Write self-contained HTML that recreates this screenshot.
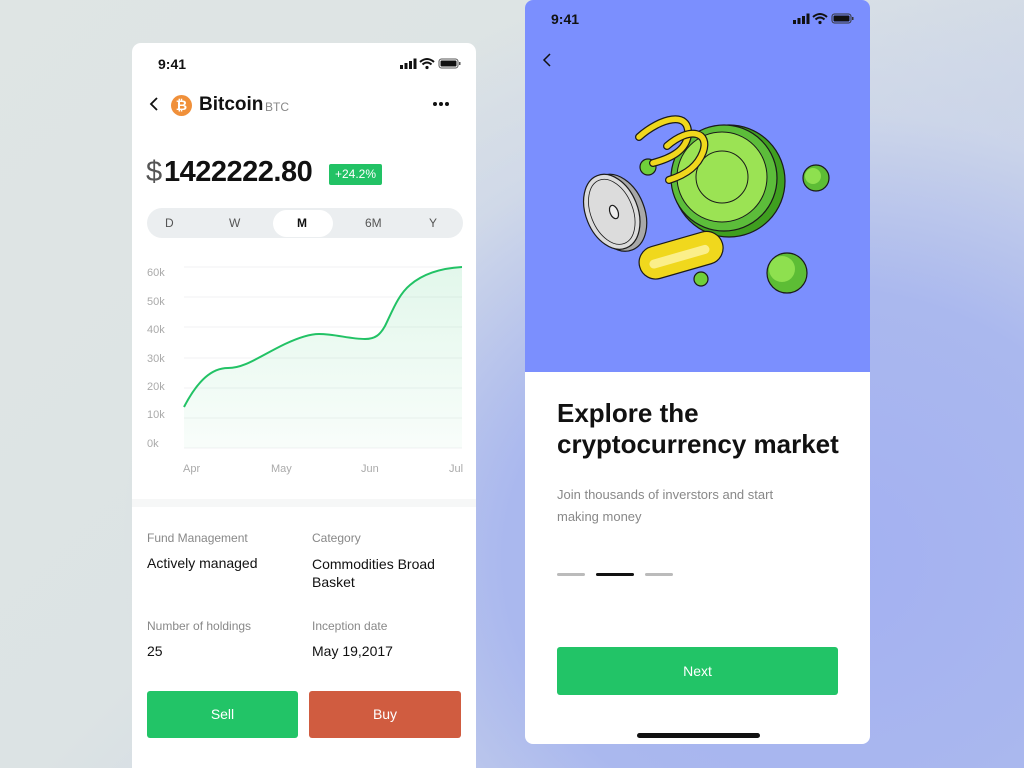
<!DOCTYPE html>
<html><head><meta charset="utf-8"><style>
*{margin:0;padding:0;box-sizing:border-box}
html,body{width:1024px;height:768px;overflow:hidden}
body{position:relative;font-family:"Liberation Sans",sans-serif;
background:radial-gradient(ellipse 700px 600px at 820px 560px,#a3b0f2 0%,#aab8ee 45%,rgba(200,210,235,0.6) 75%,rgba(223,229,228,0) 100%),linear-gradient(135deg,#dfe5e4 0%,#dce3e4 45%,#b9c4ec 100%)}
.abs{position:absolute}
.card{position:absolute;background:#fff;overflow:hidden}
.t{position:absolute;white-space:nowrap}
</style></head><body>

<!-- LEFT CARD -->
<div class="card" style="left:132px;top:43px;width:344px;height:725px;border-radius:9px 9px 0 0">
  <div class="t" style="left:26px;top:13px;font-size:14px;font-weight:bold;color:#111">9:41</div>
  <svg class="abs" style="left:266px;top:14px" width="64" height="14">
    <rect x="2" y="8" width="3" height="4" fill="#111"/><rect x="6.5" y="6" width="3" height="6" fill="#111"/><rect x="11" y="4" width="3" height="8" fill="#111"/><rect x="15.5" y="1.5" width="3" height="10.5" fill="#111"/>
    <path d="M22 5 Q29 -1 36 5" stroke="#111" stroke-width="2" fill="none"/><path d="M24.5 7.5 Q29 3.5 33.5 7.5" stroke="#111" stroke-width="2" fill="none"/><circle cx="29" cy="10.5" r="1.6" fill="#111"/>
    <rect x="41" y="2" width="19" height="9" rx="2.5" fill="none" stroke="#555" stroke-width="1"/><rect x="42.5" y="3.5" width="16" height="6" rx="1" fill="#111"/><rect x="61" y="5" width="1.5" height="3" fill="#555"/>
  </svg>
  <svg class="abs" style="left:16px;top:53px" width="12" height="16"><path d="M9 2 L3 8 L9 14" stroke="#111" stroke-width="1.8" fill="none"/></svg>
  <div class="abs" style="left:39px;top:52px;width:21px;height:21px;border-radius:50%;background:#f0903a;color:#fff;font-weight:bold;font-size:14px;text-align:center;line-height:21px">₿</div>
  <div class="t" style="left:67px;top:51px;font-size:19px;font-weight:bold;color:#111">Bitcoin</div>
  <div class="t" style="left:133px;top:57px;font-size:12px;color:#888">BTC</div>
  <div class="abs" style="left:301px;top:59px;width:4px;height:4px;border-radius:50%;background:#111;box-shadow:6px 0 #111,12px 0 #111"></div>
  <div class="t" style="left:14px;top:113px;font-size:29px;color:#555;font-weight:300">$</div>
  <div class="t" style="left:32px;top:113px;font-size:29px;font-weight:bold;color:#111;letter-spacing:-0.5px">1422222.80</div>
  <div class="abs" style="left:197px;top:121px;width:53px;height:21px;background:#22c265;border-radius:2px;color:#fff;font-size:12px;text-align:center;line-height:21px">+24.2%</div>
  <div class="abs" style="left:15px;top:165px;width:316px;height:30px;background:#ebeef0;border-radius:15px"></div>
  <div class="abs" style="left:141px;top:167px;width:60px;height:27px;background:#fff;border-radius:14px"></div>
  <div class="t" style="left:33px;top:173px;font-size:12px;color:#555">D</div>
  <div class="t" style="left:97px;top:173px;font-size:12px;color:#555">W</div>
  <div class="t" style="left:165px;top:173px;font-size:12px;color:#111;font-weight:bold">M</div>
  <div class="t" style="left:233px;top:173px;font-size:12px;color:#555">6M</div>
  <div class="t" style="left:297px;top:173px;font-size:12px;color:#555">Y</div>
  <div class="abs" style="left:0;top:456px;width:344px;height:8px;background:#f6f7f7"></div>
  <div class="t" style="left:15px;top:488px;font-size:12px;color:#888">Fund Management</div>
  <div class="t" style="left:180px;top:488px;font-size:12px;color:#888">Category</div>
  <div class="t" style="left:15px;top:512px;font-size:14px;color:#111">Actively managed</div>
  <div class="t" style="left:180px;top:512px;font-size:14px;color:#111;line-height:18px">Commodities Broad<br>Basket</div>
  <div class="t" style="left:15px;top:576px;font-size:12px;color:#888">Number of holdings</div>
  <div class="t" style="left:180px;top:576px;font-size:12px;color:#888">Inception date</div>
  <div class="t" style="left:15px;top:600px;font-size:14px;color:#111">25</div>
  <div class="t" style="left:180px;top:600px;font-size:14px;color:#111">May 19,2017</div>
  <div class="abs" style="left:15px;top:648px;width:151px;height:47px;background:#22c467;border-radius:3px;color:#fff;font-size:14px;text-align:center;line-height:47px">Sell</div>
  <div class="abs" style="left:177px;top:648px;width:152px;height:47px;background:#d05c40;border-radius:3px;color:#fff;font-size:14px;text-align:center;line-height:47px">Buy</div>
</div>
<svg class="abs" style="left:0;top:0" width="1024" height="768">
  <defs><linearGradient id="g" x1="0" y1="0" x2="0" y2="1"><stop offset="0" stop-color="#22c265" stop-opacity="0.13"/><stop offset="1" stop-color="#22c265" stop-opacity="0.03"/></linearGradient></defs>
  <g stroke="#f1f2f3" stroke-width="1">
    <line x1="184" y1="267" x2="462" y2="267"/><line x1="184" y1="297" x2="462" y2="297"/><line x1="184" y1="327" x2="462" y2="327"/><line x1="184" y1="358" x2="462" y2="358"/><line x1="184" y1="388" x2="462" y2="388"/><line x1="184" y1="418" x2="462" y2="418"/><line x1="184" y1="448" x2="462" y2="448"/>
  </g>
  <path d="M184 407 C198 380 212 368 228 368 C245 368 260 356 285 344 C300 337 310 334 319 334 C335 334 350 339 365 339 C375 339 380 335 385 326 C392 312 398 295 410 285 C425 272 445 268 462 267 L462 448 L184 448 Z" fill="url(#g)"/>
  <path d="M184 407 C198 380 212 368 228 368 C245 368 260 356 285 344 C300 337 310 334 319 334 C335 334 350 339 365 339 C375 339 380 335 385 326 C392 312 398 295 410 285 C425 272 445 268 462 267" fill="none" stroke="#22c265" stroke-width="2"/>
  <g font-family="Liberation Sans" font-size="11" fill="#aaa">
    <text x="147" y="276">60k</text><text x="147" y="305">50k</text><text x="147" y="333">40k</text><text x="147" y="362">30k</text><text x="147" y="390">20k</text><text x="147" y="418">10k</text><text x="147" y="447">0k</text>
    <text x="183" y="472">Apr</text><text x="271" y="472">May</text><text x="361" y="472">Jun</text><text x="449" y="472">Jul</text>
  </g>
</svg>

<!-- RIGHT CARD -->
<div class="card" style="left:525px;top:0;width:345px;height:744px;border-radius:8px">
  <div class="abs" style="left:0;top:0;width:345px;height:372px;background:#7b8ffe"></div>
  <div class="t" style="left:26px;top:11px;font-size:14px;font-weight:bold;color:#111">9:41</div>
  <svg class="abs" style="left:266px;top:12px" width="64" height="14">
    <rect x="2" y="8" width="3" height="4" fill="#111"/><rect x="6.5" y="6" width="3" height="6" fill="#111"/><rect x="11" y="4" width="3" height="8" fill="#111"/><rect x="15.5" y="1.5" width="3" height="10.5" fill="#111"/>
    <path d="M22 5 Q29 -1 36 5" stroke="#111" stroke-width="2" fill="none"/><path d="M24.5 7.5 Q29 3.5 33.5 7.5" stroke="#111" stroke-width="2" fill="none"/><circle cx="29" cy="10.5" r="1.6" fill="#111"/>
    <rect x="41" y="2" width="19" height="9" rx="2.5" fill="none" stroke="#333" stroke-width="1"/><rect x="42.5" y="3.5" width="16" height="6" rx="1" fill="#111"/><rect x="61" y="5" width="1.5" height="3" fill="#333"/>
  </svg>
  <svg class="abs" style="left:16px;top:52px" width="12" height="16"><path d="M9 2 L3 8 L9 14" stroke="#111" stroke-width="1.5" fill="none"/></svg>
  <div class="t" style="left:32px;top:398px;font-size:26px;font-weight:bold;color:#111;line-height:31px">Explore the<br>cryptocurrency market</div>
  <div class="t" style="left:32px;top:484px;font-size:13px;color:#888;line-height:22px">Join thousands of inverstors and start<br>making money</div>
  <div class="abs" style="left:32px;top:573px;width:28px;height:3px;background:#bbb;border-radius:2px"></div>
  <div class="abs" style="left:71px;top:573px;width:38px;height:3px;background:#111;border-radius:2px"></div>
  <div class="abs" style="left:120px;top:573px;width:28px;height:3px;background:#bbb;border-radius:2px"></div>
  <div class="abs" style="left:32px;top:647px;width:281px;height:48px;background:#22c467;border-radius:3px;color:#fff;font-size:14px;text-align:center;line-height:48px">Next</div>
  <div class="abs" style="left:112px;top:733px;width:123px;height:5px;background:#111;border-radius:3px"></div>
</div>
<svg class="abs" style="left:0;top:0" width="1024" height="768">
  <g stroke="#1a1a1a" stroke-width="1.2">
    <g transform="rotate(-22 614 212)">
      <ellipse cx="617" cy="214" rx="27" ry="40" fill="#a8a8a8"/>
      <ellipse cx="612" cy="211" rx="26" ry="39" fill="#dcdcdc"/>
      <ellipse cx="612" cy="211" rx="21" ry="34" fill="none" stroke-width="0.8"/>
      <ellipse cx="614" cy="212" rx="4" ry="7" fill="#eee"/>
    </g>
    <circle cx="729" cy="181" r="56" fill="#3f9f1f"/>
    <circle cx="724" cy="178" r="53" fill="#5cbd3a"/>
    <circle cx="722" cy="177" r="45" fill="#9be354" stroke-width="1"/>
    <circle cx="722" cy="177" r="26" fill="#9be354" stroke-width="1"/>
    <g transform="rotate(-16 680 255)">
      <rect x="638" y="239" width="86" height="33" rx="16.5" fill="#f0d81d"/>
      <rect x="648" y="252" width="62" height="9" rx="4.5" fill="#fbef8a" stroke="none"/>
    </g>
    <circle cx="648" cy="167" r="8" fill="#6fcf3a"/>
    <circle cx="816" cy="178" r="13" fill="#5dbd35"/><circle cx="813" cy="176" r="8" fill="#8ee04f" stroke="none"/>
    <circle cx="787" cy="273" r="20" fill="#5dbd35"/><circle cx="782" cy="269" r="13" fill="#8ee04f" stroke="none"/>
    <circle cx="701" cy="279" r="7" fill="#6fcf3a"/>
  </g>
  <path d="M639 137 C660 118 690 110 688 135 C686 150 672 158 653 163" fill="none" stroke="#1a1a1a" stroke-width="8" stroke-linecap="round"/>
  <path d="M639 137 C660 118 690 110 688 135 C686 150 672 158 653 163" fill="none" stroke="#f0d81d" stroke-width="5.5" stroke-linecap="round"/>
  <path d="M667 146 C690 126 710 132 703 152 C698 165 688 174 669 180" fill="none" stroke="#1a1a1a" stroke-width="8" stroke-linecap="round"/>
  <path d="M667 146 C690 126 710 132 703 152 C698 165 688 174 669 180" fill="none" stroke="#f0d81d" stroke-width="5.5" stroke-linecap="round"/>
</svg>
</body></html>
